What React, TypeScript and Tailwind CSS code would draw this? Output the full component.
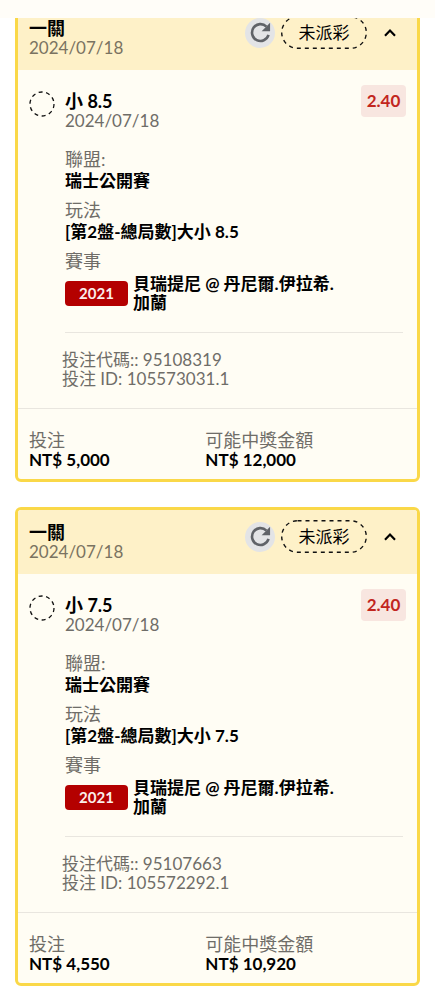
import React, { useState } from 'react'

interface Bet {
  code: string
  betId: string
  date: string
  line: string
  odds: string
  stake: string
  payout: string
}

const bets: Bet[] = [
  {
    code: '95108319',
    betId: '105573031.1',
    date: '2024/07/18',
    line: '8.5',
    odds: '2.40',
    stake: '5,000',
    payout: '12,000',
  },
  {
    code: '95107663',
    betId: '105572292.1',
    date: '2024/07/18',
    line: '7.5',
    odds: '2.40',
    stake: '4,550',
    payout: '10,920',
  },
]

const RefreshIcon = () => (
  <svg width="23" height="23" viewBox="0 0 24 24" fill="none" aria-hidden="true">
    <path d="M20.4 14.6A8.8 8.8 0 1 1 18.2 5.8" stroke="#606368" strokeWidth="2.7" />
    <path d="M22 1.8V10.6H13.2Z" fill="#606368" />
  </svg>
)

const ChevronUp = ({ open }: { open: boolean }) => (
  <svg
    width="18"
    height="18"
    viewBox="0 0 18 18"
    fill="none"
    aria-hidden="true"
    className={open ? '' : 'rotate-180'}
  >
    <path d="M4 11.8L9 6.6L14 11.8" stroke="#000" strokeWidth="2.2" />
  </svg>
)

const DashedCircle = () => (
  <svg width="26" height="26" viewBox="0 0 26 26" fill="none" aria-hidden="true" className="shrink-0">
    <circle cx="13" cy="13" r="12" stroke="#111" strokeWidth="1.3" strokeDasharray="4 3.54" />
  </svg>
)

const Field = ({ label, children }: { label: string; children?: React.ReactNode }) => (
  <div className="leading-[21px]">
    <dt className="text-lg leading-[21px] text-[#6f6d68]">{label}</dt>
    {children && <dd className="font-bold text-black">{children}</dd>}
  </div>
)

const BetCard = ({ bet }: { bet: Bet }) => {
  const [open, setOpen] = useState(true)

  return (
    <article className="overflow-hidden rounded-md border-3 border-[#fad848] bg-[#fffdf4]">
      <header className="flex items-start justify-between bg-[#fef1c8] pt-[10px] pr-[18px] pb-3 pl-[11px]">
        <div className="pt-[2px] leading-5">
          <h2 className="text-lg leading-5 font-bold text-black">一關</h2>
          <p className="text-[#7a7361]">{bet.date}</p>
        </div>
        <div className="flex items-center">
          <button
            type="button"
            aria-label="重新整理"
            className="flex size-[30px] items-center justify-center rounded-full bg-[#e3e4e6]"
          >
            <RefreshIcon />
          </button>
          <span className="relative ml-[6px] flex h-[33px] w-[86px] items-center justify-center text-black">
            <svg width="86" height="33" viewBox="0 0 86 33" fill="none" aria-hidden="true" className="absolute inset-0">
              <rect x="0.7" y="0.7" width="84.6" height="31.6" rx="15.8" stroke="#111" strokeWidth="1.4" strokeDasharray="4 4" />
            </svg>
            未派彩
          </span>
          <button
            type="button"
            aria-label="收合"
            aria-expanded={open}
            onClick={() => setOpen(!open)}
            className="ml-[14px]"
          >
            <ChevronUp open={open} />
          </button>
        </div>
      </header>

      {open && (
        <div className="pr-[14px] pb-5 pl-[11px]">
          <div className="flex items-start pt-[15px]">
            <div className="pt-[6px]">
              <DashedCircle />
            </div>
            <div className="ml-[10px] flex-1 pt-[6px] leading-5">
              <h3 className="text-lg leading-5 font-bold text-black">小 {bet.line}</h3>
              <p className="text-[#6f6d68]">{bet.date}</p>
            </div>
            <span className="mr-[-3px] flex h-8 w-[45px] items-center justify-center rounded bg-[#f8e6e0] font-bold text-[#c2261e]">
              {bet.odds}
            </span>
          </div>

          <div className="pl-9">
            <dl className="flex flex-col gap-[9px] pt-[18px]">
              <Field label="聯盟:">瑞士公開賽</Field>
              <Field label="玩法">[第2盤-總局數]大小 {bet.line}</Field>
              <Field label="賽事" />
            </dl>
            <div className="flex items-center gap-[5px] pt-[2px]">
              <span className="flex h-[25px] w-[63px] shrink-0 items-center justify-center rounded-sm bg-[#b40000] text-[15px] font-bold text-[#fbeeea]">
                2021
              </span>
              <p className="max-w-[220px] leading-[19px] font-bold text-black">
                貝瑞提尼 @ 丹尼爾.伊拉希.
                <br />
                加蘭
              </p>
            </div>
            <hr className="mt-5 border-[#e9e6df]" />
          </div>

          <div className="pt-[17px] pl-[33px] leading-[19px] text-[#6f6d68]">
            <p>投注代碼:: {bet.code}</p>
            <p>投注 ID: {bet.betId}</p>
          </div>
        </div>
      )}

      <footer className="border-t border-[#e9e6df] pt-[22px] pb-[10px] pl-[11px]">
        <dl className="grid grid-cols-[5fr_6fr] leading-[19px]">
          <div>
            <dt className="text-lg leading-[19px] text-[#6f6d68]">投注</dt>
            <dd className="font-bold text-black">NT$ {bet.stake}</dd>
          </div>
          <div>
            <dt className="text-lg leading-[19px] text-[#6f6d68]">可能中獎金額</dt>
            <dd className="font-bold text-black">NT$ {bet.payout}</dd>
          </div>
        </dl>
      </footer>
    </article>
  )
}

const App: React.FC = () => {
  return (
    <div className="min-h-screen bg-white font-['Lato','Noto_Sans_CJK_TC',sans-serif] text-[17px]">
      <div className="relative z-10 h-[18px] bg-[#fffdf8]" />
      {/* the list is scrolled a little way under the top bar */}
      <main className="-mt-[15px] flex flex-col gap-[25px] px-[15px] pb-3">
        {bets.map((bet) => (
          <BetCard key={bet.code} bet={bet} />
        ))}
      </main>
    </div>
  )
}

export default App
